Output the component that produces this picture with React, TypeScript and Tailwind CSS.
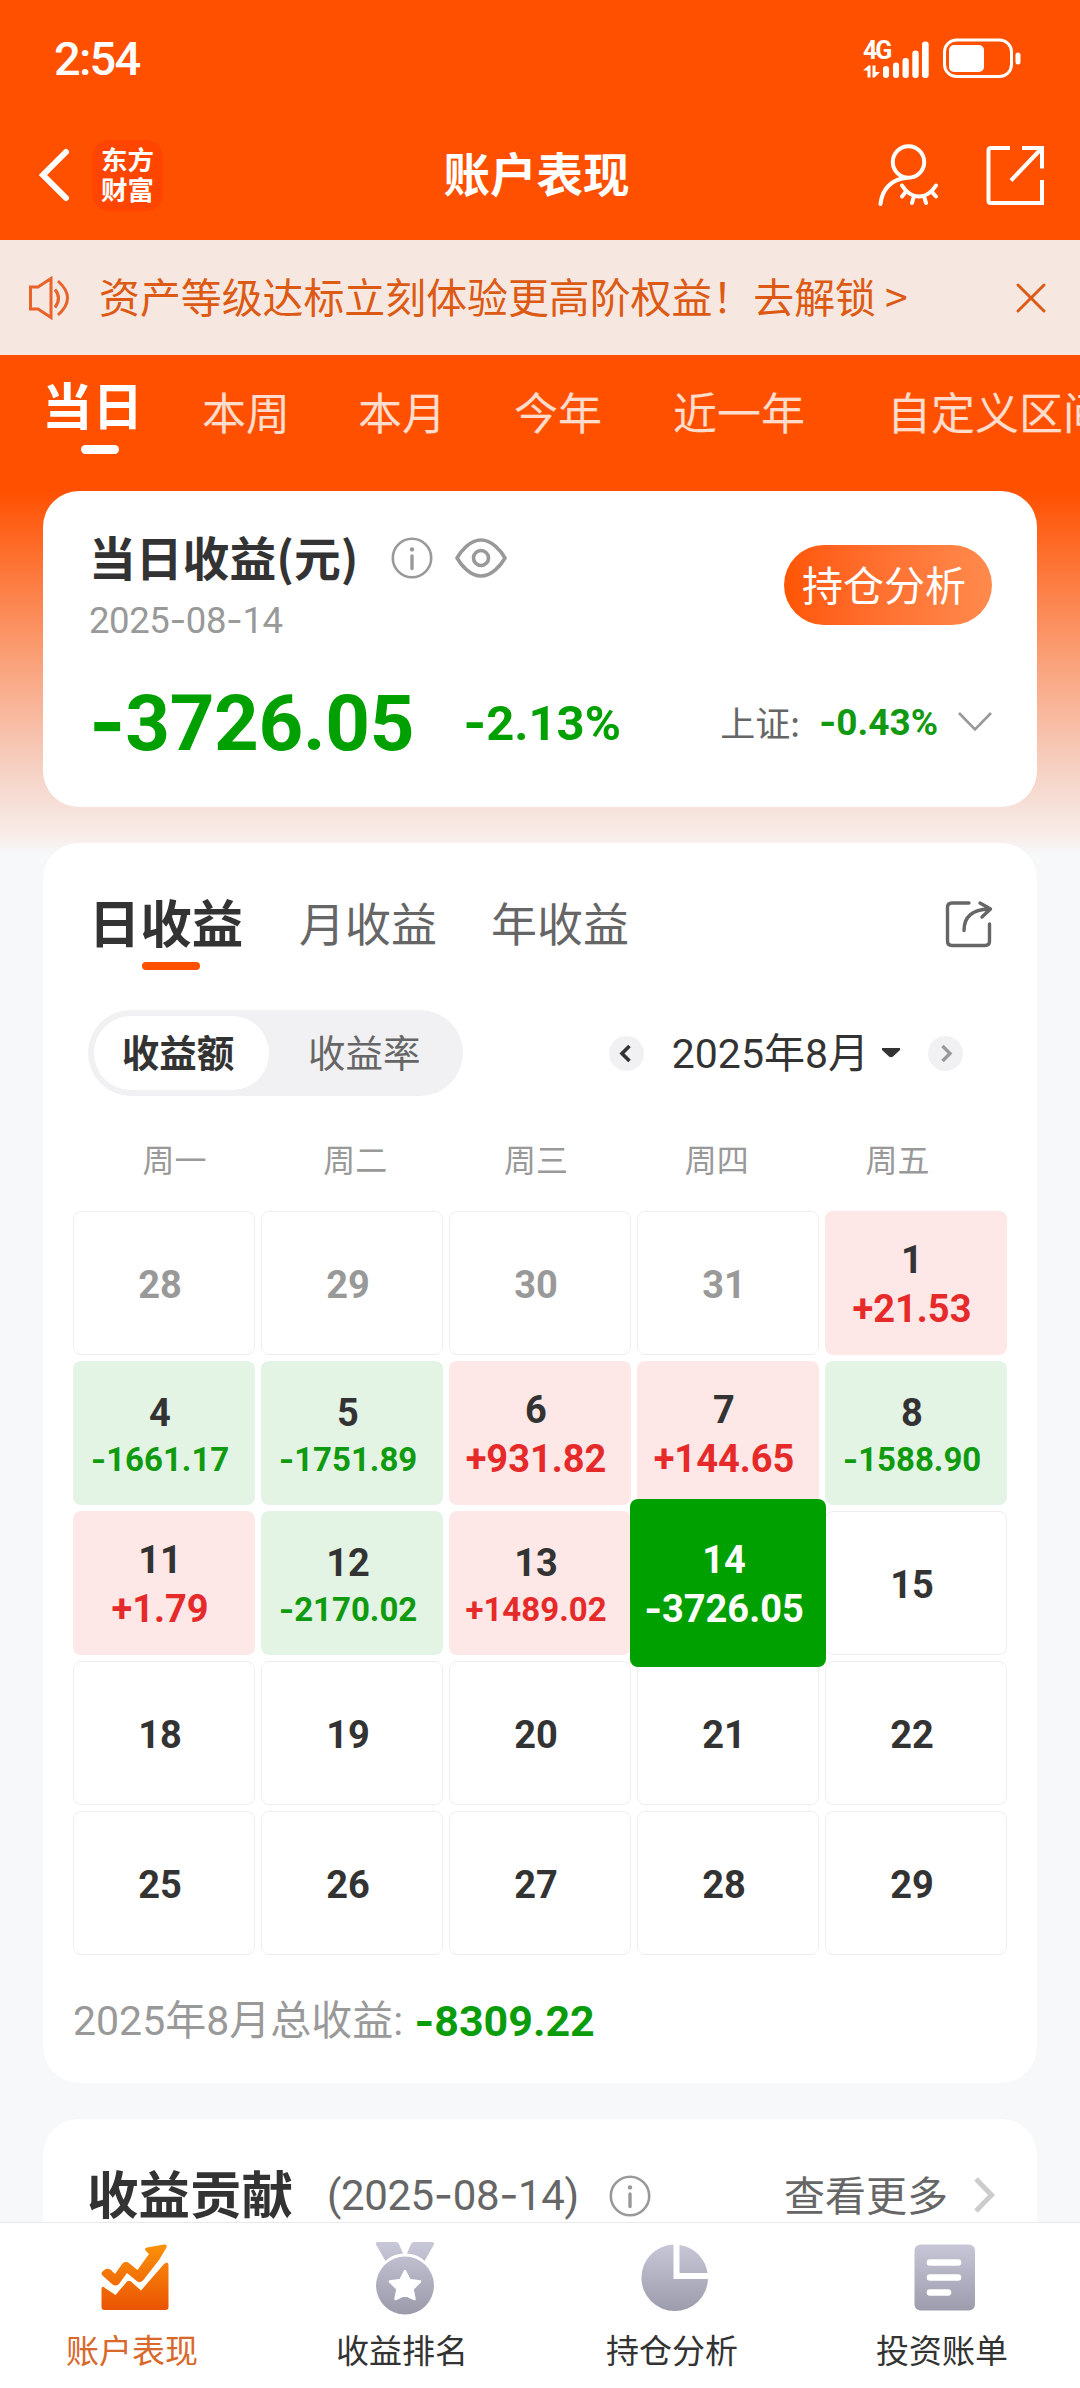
import { clsx } from "clsx";
import { X } from "lucide-react";

const PERIODS = ["本周", "本月", "今年"];

const WEEKDAYS = ["周一", "周二", "周三", "周四", "周五"];

type Day = { day: number; value?: string; muted?: boolean; selected?: boolean };

const DAYS: Day[] = [
  { day: 28, muted: true },
  { day: 29, muted: true },
  { day: 30, muted: true },
  { day: 31, muted: true },
  { day: 1, value: "+21.53" },
  { day: 4, value: "-1661.17" },
  { day: 5, value: "-1751.89" },
  { day: 6, value: "+931.82" },
  { day: 7, value: "+144.65" },
  { day: 8, value: "-1588.90" },
  { day: 11, value: "+1.79" },
  { day: 12, value: "-2170.02" },
  { day: 13, value: "+1489.02" },
  { day: 14, value: "-3726.05", selected: true },
  { day: 15 },
  { day: 18 },
  { day: 19 },
  { day: 20 },
  { day: 21 },
  { day: 22 },
  { day: 25 },
  { day: 26 },
  { day: 27 },
  { day: 28 },
  { day: 29 },
];

// Digits in Roboto, hyphens in Inter because Roboto's are too short
function Num({ children, className }: { children: string; className?: string }) {
  return (
    <span className={clsx("whitespace-nowrap font-[Roboto,sans-serif]", className)}>
      {children.split(/(-)/).map((part, i) =>
        part === "-" ? (
          <span key={i} className="font-[Inter,sans-serif] leading-[0]">
            -
          </span>
        ) : (
          part
        )
      )}
    </span>
  );
}

function InfoIcon() {
  return (
    <svg width="42" height="42" viewBox="0 0 42 42" fill="none" stroke="#999" className="shrink-0">
      <circle cx="21" cy="21" r="19.2" strokeWidth="2.6" />
      <path d="M21 19v12.5" strokeWidth="3.4" strokeLinecap="round" />
      <circle cx="21" cy="12.4" r="2.2" fill="#999" stroke="none" />
    </svg>
  );
}

function StatusBar() {
  return (
    <div className="flex h-[116px] items-center justify-between pl-[54px] pr-[59px] text-white">
      <Num className="pt-[2px] text-[47px] font-medium tracking-[-1.8px]">2:54</Num>
      <div className="flex items-end gap-[14px]">
        <div className="flex items-end">
          <div className="flex h-[37px] w-[20px] flex-col justify-between">
            <span className="h-[18px] w-[28px] font-[Roboto,sans-serif] text-[25px] leading-[19px] font-bold tracking-[-2px]">
              4G
            </span>
            <svg width="17" height="13" viewBox="0 0 17 13" fill="#fff">
              <path d="M0 5.500 5.500 0.500H7.500V12.500H4.500V5.500ZM9.500 0.500H12.500V7H17L11.500 12.500H9.500Z" />
            </svg>
          </div>
          <svg width="46" height="37" viewBox="0 0 46 37" fill="#fff">
            <rect x="0" y="25" width="6" height="12" rx="3" />
            <rect x="10" y="21.5" width="6" height="15.5" rx="3" />
            <rect x="19.5" y="17" width="6.3" height="20" rx="3" />
            <rect x="29.3" y="9.5" width="6.4" height="27.5" rx="3" />
            <rect x="39" y="0.5" width="6.7" height="36.5" rx="3" />
          </svg>
        </div>
        <svg width="78" height="40" viewBox="0 0 78 40" fill="none">
          <rect x="1.5" y="2" width="67" height="36.5" rx="12" stroke="#fff" strokeWidth="3" />
          <rect x="6" y="7" width="35" height="27" rx="5" fill="#fff" />
          <rect x="72.5" y="14.5" width="5" height="12" rx="2.5" fill="#fff" />
        </svg>
      </div>
    </div>
  );
}

function Header() {
  return (
    <header className="relative flex h-[124px] items-center justify-between pb-[6px] pl-[38px] pr-[36px] text-white">
      <div className="flex items-center gap-[21px]">
        <svg width="33" height="54" viewBox="0 0 33 54" fill="none" stroke="#fff" strokeWidth="6" strokeLinecap="round">
          <path d="M28 4 5 27l23 23" strokeLinejoin="miter" />
        </svg>
        <div className="flex h-[71px] w-[71px] flex-col items-center justify-center rounded-[17px] bg-[#ff4500] pb-[3px] text-[26.5px] leading-[30px] font-bold">
          <span>东方</span>
          <span>财富</span>
        </div>
      </div>
      <h1 className="absolute inset-x-0 top-[26px] pr-[7px] text-center text-[46.5px] leading-[60px] font-bold">
        账户表现
      </h1>
      <div className="flex items-center gap-[48px]">
        <svg width="60" height="62" viewBox="0 0 60 62" fill="none" stroke="#fff" strokeWidth="4" strokeLinecap="round">
          <circle cx="30.5" cy="18" r="15.7" />
          <path d="M28 34C14 35 4 45 2.5 60" />
          <path d="M24 41.5Q31 52.5 41 52.5T58 41.5" />
          <path d="M28 47.5 24 52.5M36 52 34 59M46 52 48 59M53.5 47.5 58 52.5" />
        </svg>
        <svg width="58" height="60" viewBox="0 0 58 60" fill="none" stroke="#fff" strokeWidth="4">
          <path d="M24 3H5Q2.5 3 2.5 5.500V55.500Q2.500 58 5 58H56V35M36 3H56V23.500M56 3 25 35.500" />
        </svg>
      </div>
    </header>
  );
}

function Notice() {
  return (
    <div className="flex h-[115px] items-center bg-[#f6e8e1] pl-[28px] pr-[23px] text-[#dd5a14]">
      <svg width="42" height="44" viewBox="0 0 42 44" fill="none" stroke="#e8622a" strokeWidth="3">
        <path d="M2.500 11H10L23 2.500V41.500L10 33H2.500Z" />
        <path d="M27 13.500Q34 22 27 31.500M30 5Q49 22 30 39" />
      </svg>
      <p className="ml-[29px] flex-1 pb-[3px] text-[40.9px] leading-[60px] whitespace-nowrap">
        资产等级达标立刻体验更高阶权益！去解锁 &gt;
      </p>
      <X className="h-[52px] w-[52px]" strokeWidth={1.35} />
    </div>
  );
}

function PeriodTabs() {
  return (
    <nav className="flex h-[136px] pl-[43px] text-[44px] leading-[60px] whitespace-nowrap text-white/80">
      <div className="flex w-[99px] shrink-0 flex-col items-center pt-[18px] font-bold text-white">
        <span className="text-[50.5px] leading-[60px]">当日</span>
        <span className="mt-[12px] ml-[14px] h-[9px] w-[38px] rounded-full bg-white" />
      </div>
      <div className="ml-[60px] flex gap-[68px] pt-[26px]">
        {PERIODS.map((label) => (
          <span key={label}>{label}</span>
        ))}
        <span className="ml-[3px]">近一年</span>
        <span className="ml-[14px]">自定义区间</span>
      </div>
    </nav>
  );
}

function SummaryCard() {
  return (
    <section className="mx-[43px] h-[316px] rounded-[36px] bg-white pl-[46px] pr-[45px]">
      <div className="flex h-[170px] items-start justify-between">
        <div className="pt-[35px]">
          <div className="flex h-[64px] items-center">
            <h2 className="pb-[4px] text-[46.8px] leading-[60px] font-bold whitespace-nowrap text-[#333]">
              当日收益(元)
            </h2>
            <span className="ml-[33px]">
              <InfoIcon />
            </span>
            <svg width="52" height="42" viewBox="0 0 52 42" fill="none" stroke="#999" strokeWidth="3.6" className="ml-[22px]">
              <path d="M2 21C6 14 15 3 26 3S46 14 50 21C46 28 37 39 26 39S6 28 2 21Z" strokeLinejoin="round" />
              <circle cx="26" cy="21" r="7.500" />
            </svg>
          </div>
          <Num className="mt-[3px] block text-[36.5px] leading-[56px] tracking-[-0.4px] text-[#999]">2025-08-14</Num>
        </div>
        <button className="mt-[54px] h-[80px] w-[208px] rounded-full bg-linear-to-r from-[#ff5500] to-[#ff8a4c] pr-[8px] pb-[4px] text-[41px] leading-[60px] text-white">
          持仓分析
        </button>
      </div>
      <div className="flex h-[126px] items-center">
        <Num className="text-[78px] leading-[90px] font-bold tracking-[-0.3px] text-[#00a000]">-3726.05</Num>
        <Num className="ml-[49px] text-[49px] leading-[60px] font-bold text-[#00a000]">-2.13%</Num>
        <div className="ml-auto flex items-center pb-[4px]">
          <span className="text-[35px] leading-[50px] text-[#666]">上证:</span>
          <Num className="ml-[19px] pt-[2px] text-[37px] leading-[50px] font-bold text-[#119911]">-0.43%</Num>
          <svg width="34" height="20" viewBox="0 0 34 20" fill="none" stroke="#999" strokeWidth="2.600" className="ml-[20px]">
            <path d="M1 1 17 17.500 33 1" />
          </svg>
        </div>
      </div>
    </section>
  );
}

function DayCell({ day, value, muted, selected }: Day) {
  const loss = value?.startsWith("-");
  const small = !selected && value && value.length > 7;

  return (
    <div
      className={clsx(
        "flex h-[144px] flex-col items-center justify-center rounded-[8px] pt-[4px] pr-[8px] text-[38px] leading-[49px] font-bold",
        !value && "border border-[#eee]",
        value && !selected && (loss ? "bg-[#e3f4e4]" : "bg-[#fde8e7]"),
        selected && "relative -mx-[7px] -my-[12px] h-[168px] bg-[#00a000] text-white",
        muted && "text-[#999]",
        !muted && !selected && "text-[#333]"
      )}
    >
      <Num>{String(day)}</Num>
      {value && (
        <Num
          className={clsx(
            small && "text-[33px] leading-[43px]",
            !selected && (loss ? "text-[#0f9a0f]" : "text-[#e62a2a]")
          )}
        >
          {value}
        </Num>
      )}
    </div>
  );
}

function CalendarCard() {
  return (
    <section className="mx-[43px] mt-[36px] h-[1240px] overflow-hidden rounded-[36px] bg-white px-[30px]">
      <div className="flex h-[167px] pt-[48px] pl-[15px] text-[46px] leading-[60px] whitespace-nowrap text-[#666]">
        <div className="flex w-[156px] shrink-0 flex-col items-center">
          <span className="text-[51.5px] leading-[60px] font-bold text-[#333]">日收益</span>
          <span className="mt-[11px] ml-[10px] h-[8px] w-[58px] rounded-full bg-[#ff5000]" />
        </div>
        <span className="ml-[55px]">月收益</span>
        <span className="ml-[54px]">年收益</span>
        <svg
          width="48"
          height="48"
          viewBox="0 0 48 48"
          fill="none"
          stroke="#666"
          strokeWidth="3.4"
          strokeLinecap="round"
          strokeLinejoin="round"
          className="mt-[9px] mr-[14px] ml-auto"
        >
          <path d="M24 3H7Q2.500 3 2.500 7.500V41Q2.500 45.500 7 45.500H40Q44.500 45.500 44.500 41V24" />
          <path d="M19 30.500C19 17 27 9.500 44 9M35 3 45.500 9 37 17" />
        </svg>
      </div>

      <div className="flex h-[86px] items-center pl-[15px]">
        <div className="flex h-[86px] w-[375px] items-center rounded-full bg-[#f1f1f4] pl-[6px] text-[37.5px] leading-[50px]">
          <span className="flex h-[74px] w-[175px] items-center justify-center rounded-full bg-white pr-[7px] pb-[4px] font-bold text-[#333]">
            收益额
          </span>
          <span className="ml-[39px] pb-[4px] text-[#666]">收益率</span>
        </div>
        <div className="ml-auto flex items-center pr-[44px]">
          <svg width="35" height="35" viewBox="0 0 35 35" fill="none">
            <circle cx="17.500" cy="17.500" r="17.500" fill="#f1f1f4" />
            <path d="M20.500 10 13 17.500l7.500 7.500" stroke="#333" strokeWidth="3.600" />
          </svg>
          <span className="ml-[28px] pt-[2px] font-[Roboto,'Noto_Sans_CJK_SC',sans-serif] text-[41px] leading-[60px] text-[#333]">
            2025年8月
          </span>
          <svg width="18" height="10" viewBox="0 0 18 10" fill="#333" className="ml-[13px]">
            <path d="M0 0H18V2L11 8.500Q9 10 7 8.500L0 2Z" />
          </svg>
          <svg width="35" height="35" viewBox="0 0 35 35" fill="none" className="ml-[28px]">
            <circle cx="17.500" cy="17.500" r="17.500" fill="#f1f1f4" />
            <path d="M14.500 10 22 17.500 14.500 25" stroke="#999" strokeWidth="3.400" />
          </svg>
        </div>
      </div>

      <div className="mt-[32px] mr-[19px] ml-[11px] grid grid-cols-5 text-center text-[32px] leading-[60px] text-[#999]">
        {WEEKDAYS.map((label) => (
          <span key={label}>{label}</span>
        ))}
      </div>

      <div className="mt-[23px] grid grid-cols-5 gap-[6px]">
        {DAYS.map((d, i) => (
          <DayCell key={i} {...d} />
        ))}
      </div>

      <div className="mt-[36px] flex items-center leading-[60px]">
        <span className="font-[Roboto,'Noto_Sans_CJK_SC',sans-serif] text-[41px] text-[#999]">2025年8月总收益:</span>
        <Num className="ml-[11px] text-[43px] font-bold text-[#0a9c0a]">-8309.22</Num>
      </div>
    </section>
  );
}

function ContributionCard() {
  return (
    <section className="mx-[43px] mt-[36px] h-[103px] overflow-hidden rounded-t-[36px] bg-white pr-[42px] pl-[44px]">
      <div className="flex h-[146px] items-center whitespace-nowrap">
        <h2 className="text-[51.5px] leading-[60px] font-bold text-[#333]">收益贡献</h2>
        <Num className="ml-[34px] pt-[7px] text-[42px] leading-[60px] tracking-[-0.4px] text-[#666]">(2025-08-14)</Num>
        <span className="ml-[30px] pt-[7px]">
          <InfoIcon />
        </span>
        <span className="ml-auto pt-[1px] text-[41px] leading-[60px] text-[#666]">查看更多</span>
        <svg width="21" height="36" viewBox="0 0 21 36" fill="none" stroke="#ccc" strokeWidth="5" className="mt-[6px] ml-[26px]">
          <path d="M2 2 17.500 18 2 34" />
        </svg>
      </div>
    </section>
  );
}

const TABS = [
  {
    label: "账户表现",
    icon: (
      <g fill="url(#tabOrange)">
        <path d="M6.500 52Q7 48 10 51L20.500 58 32 44.500Q34 43 36 44.500L46 53.500 69 27Q73.500 23 73.500 29V70Q73.500 73 70.500 73H9.500Q6.500 73 6.500 70Z" />
        <path d="M8 34Q12 30 16 33L20 37 27.500 26.500Q31 23 34.500 26.500L42.500 33 54 17 50.500 13.500Q49 11.500 52 10.500L69 7.500Q72.500 7 71.500 10.500L64 23 48 43.500Q44 47 40.500 43L32 36 24 47Q20.500 50 17 47L8 39Q5 36.500 8 34Z" />
      </g>
    ),
  },
  {
    label: "收益排名",
    icon: (
      <g fill="url(#tabGray)">
        <path d="M13 5H31Q33 5 34 7L38 16.500Q27 17 20.500 24L11 7.500Q10 5 13 5ZM67 5H49Q47 5 46 7L42 16.500Q53 17 59.500 24L69 7.500Q70 5 67 5Z" />
        <circle cx="40" cy="48.500" r="29" />
        <path
          d="M40 34 44.500 43 55 44.500 47.500 52 49.500 62 40 57.500 30.500 62 32.500 52 25 44.500 35.500 43Z"
          fill="#fff"
          stroke="#fff"
          strokeWidth="2.500"
          strokeLinejoin="round"
        />
      </g>
    ),
  },
  {
    label: "持仓分析",
    icon: (
      <g fill="url(#tabGray)">
        <path d="M38.500 7.500V42H73A33.300 33.300 0 1 1 38.500 7.500Z" />
        <path d="M44.500 8A33 33 0 0 1 72.500 36H44.500Z" />
      </g>
    ),
  },
  {
    label: "投资账单",
    icon: (
      <g>
        <rect x="9.500" y="7.500" width="60.500" height="66" rx="6" fill="url(#tabGray)" />
        <path d="M25 25.500H53M25 40.500H53M25 55.500H43" stroke="#fff" strokeWidth="6.600" strokeLinecap="round" />
      </g>
    ),
  },
];

function TabBar() {
  return (
    <nav className="grid h-[166px] grid-cols-4 border-t border-[#e8e9eb] bg-white">
      {TABS.map(({ label, icon }, i) => (
        <div key={label} className="flex flex-col items-center pt-[14px]">
          <svg width="80" height="80" viewBox="0 0 80 80">
            <defs>
              <linearGradient id="tabOrange" x1="0" y1="7" x2="0" y2="73" gradientUnits="userSpaceOnUse">
                <stop stopColor="#fb9208" />
                <stop offset="1" stopColor="#ea5404" />
              </linearGradient>
              <linearGradient id="tabGray" x1="0" y1="5" x2="0" y2="77" gradientUnits="userSpaceOnUse">
                <stop stopColor="#c9c8d9" />
                <stop offset="1" stopColor="#9b9aaa" />
              </linearGradient>
            </defs>
            {icon}
          </svg>
          <span className={clsx("mt-[8px] pr-[6px] text-[33px] leading-[48px]", i === 0 ? "text-[#d9682b]" : "text-[#333]")}>
            {label}
          </span>
        </div>
      ))}
    </nav>
  );
}

export default function App() {
  return (
    <div className="h-[2388px] w-[1080px] overflow-hidden bg-[linear-gradient(180deg,#ff5000_0px,#ff5000_490px,#fa9e75_655px,#f6cfc1_765px,#f6e4de_815px,#f8ece9_835px,#f7f8fa_855px)] font-['Noto_Sans_CJK_SC',sans-serif]">
      <StatusBar />
      <Header />
      <Notice />
      <PeriodTabs />
      <SummaryCard />
      <CalendarCard />
      <ContributionCard />
      <TabBar />
    </div>
  );
}
